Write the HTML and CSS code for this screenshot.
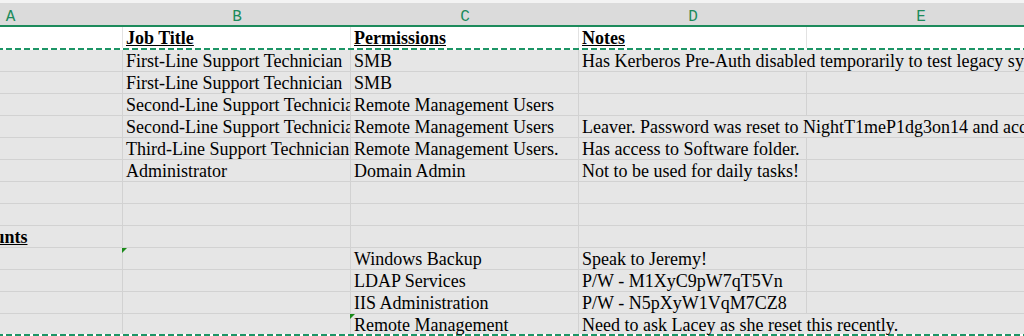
FILE: index.html
```
<!DOCTYPE html>
<html lang="en">

<head>
  <meta charset="UTF-8">
  <meta name="viewport" content="width=device-width, initial-scale=1.0">
  <title>Staff accounts</title>
  <link rel="stylesheet" href="styles.css">
</head>

<body>
  <div class="sheet">
    <!-- column letters -->
    <div class="col-heads">
      <div class="ch">A</div>
      <div class="ch">B</div>
      <div class="ch">C</div>
      <div class="ch">D</div>
      <div class="ch">E</div>
    </div>

    <div class="row row-head">
      <div class="cell"></div>
      <div class="cell title">Job Title</div>
      <div class="cell title">Permissions</div>
      <div class="cell title">Notes</div>
      <div class="cell"></div>
    </div>
    <div class="ants"></div>

    <div class="row">
      <div class="cell"></div>
      <div class="cell">First-Line Support Technician</div>
      <div class="cell">SMB</div>
      <div class="cell spill">Has Kerberos Pre-Auth disabled temporarily to test legacy systems.</div>
      <div class="cell"></div>
    </div>
    <div class="row">
      <div class="cell"></div>
      <div class="cell">First-Line Support Technician</div>
      <div class="cell">SMB</div>
      <div class="cell"></div>
      <div class="cell"></div>
    </div>
    <div class="row">
      <div class="cell"></div>
      <div class="cell clip">Second-Line Support Technician</div>
      <div class="cell">Remote Management Users</div>
      <div class="cell"></div>
      <div class="cell"></div>
    </div>
    <div class="row">
      <div class="cell"></div>
      <div class="cell clip">Second-Line Support Technician</div>
      <div class="cell">Remote Management Users</div>
      <div class="cell spill">Leaver. Password was reset to NightT1meP1dg3on14 and account disabled.</div>
      <div class="cell"></div>
    </div>
    <div class="row">
      <div class="cell"></div>
      <div class="cell">Third-Line Support Technician</div>
      <div class="cell">Remote Management Users.</div>
      <div class="cell">Has access to Software folder.</div>
      <div class="cell"></div>
    </div>
    <div class="row">
      <div class="cell"></div>
      <div class="cell">Administrator</div>
      <div class="cell">Domain Admin</div>
      <div class="cell">Not to be used for daily tasks!</div>
      <div class="cell"></div>
    </div>
    <div class="row">
      <div class="cell"></div>
      <div class="cell"></div>
      <div class="cell"></div>
      <div class="cell"></div>
      <div class="cell"></div>
    </div>
    <div class="row">
      <div class="cell"></div>
      <div class="cell"></div>
      <div class="cell"></div>
      <div class="cell"></div>
      <div class="cell"></div>
    </div>
    <div class="row">
      <div class="cell title section">Service Accounts</div>
      <div class="cell"></div>
      <div class="cell"></div>
      <div class="cell"></div>
      <div class="cell"></div>
    </div>
    <div class="row">
      <div class="cell"></div>
      <div class="cell flag"></div>
      <div class="cell">Windows Backup</div>
      <div class="cell">Speak to Jeremy!</div>
      <div class="cell"></div>
    </div>
    <div class="row">
      <div class="cell"></div>
      <div class="cell"></div>
      <div class="cell">LDAP Services</div>
      <div class="cell">P/W - M1XyC9pW7qT5Vn</div>
      <div class="cell"></div>
    </div>
    <div class="row">
      <div class="cell"></div>
      <div class="cell"></div>
      <div class="cell">IIS Administration</div>
      <div class="cell">P/W - N5pXyW1VqM7CZ8</div>
      <div class="cell"></div>
    </div>
    <div class="row row-last">
      <div class="cell"></div>
      <div class="cell"></div>
      <div class="cell flag">Remote Management</div>
      <div class="cell spill">Need to ask Lacey as she reset this recently.</div>
      <div class="cell"></div>
    </div>
    <div class="ants"></div>
  </div>
</body>

</html>
```

FILE: styles.css
```
html,
body {
  margin: 0;
  padding: 0;
  overflow: hidden;
  background: #e6e6e6;
}

/* column A is scrolled partly off to the left */
.sheet {
  width: 1142px;
  margin-left: -102px;
  font-family: "Liberation Serif", "Times New Roman", serif;
  font-size: 18px;
  color: #000;
}

.col-heads {
  display: flex;
  height: 22px;
  border-top: 3px solid #f3f3f3;
  border-bottom: 2px solid #1d8b5c;
  background: #dbdbdb;
}

.ch {
  width: 228px;
  flex: none;
  padding-top: 3px;
  text-align: center;
  line-height: 22px;
  font-family: "Liberation Mono", monospace;
  font-size: 16px;
  color: #1d8b5c;
}

.ch:first-child {
  width: 225px;
}

.row {
  display: flex;
  height: 21px;
  border-bottom: 1px solid #d2d2d2;
}

.row-head {
  background: #fff;
  border-bottom: 0;
}

.row-last {
  height: 20px;
  border-bottom: 0;
}

.cell {
  position: relative;
  box-sizing: border-box;
  width: 228px;
  flex: none;
  padding: 0 3px;
  border-right: 1px solid #d2d2d2;
  line-height: 22px;
  white-space: nowrap;
}

.cell:first-child {
  width: 225px;
}

.row-head .cell {
  border-right-color: #e2e2e2;
}

.title {
  font-weight: bold;
  text-decoration: underline;
}

.section {
  text-indent: -4px;
}

/* text running into the empty cell next to it */
.spill {
  border-right-color: transparent;
}

.clip {
  overflow: hidden;
}

/* green error marker */
.flag::before {
  content: "";
  position: absolute;
  top: 0;
  left: -1px;
  border-top: 5px solid #1a8a1a;
  border-right: 5px solid transparent;
}

/* copy selection border */
.ants {
  height: 2px;
  background: repeating-linear-gradient(90deg, #1d9566 0 6px, #fff 6px 9px);
}
```
